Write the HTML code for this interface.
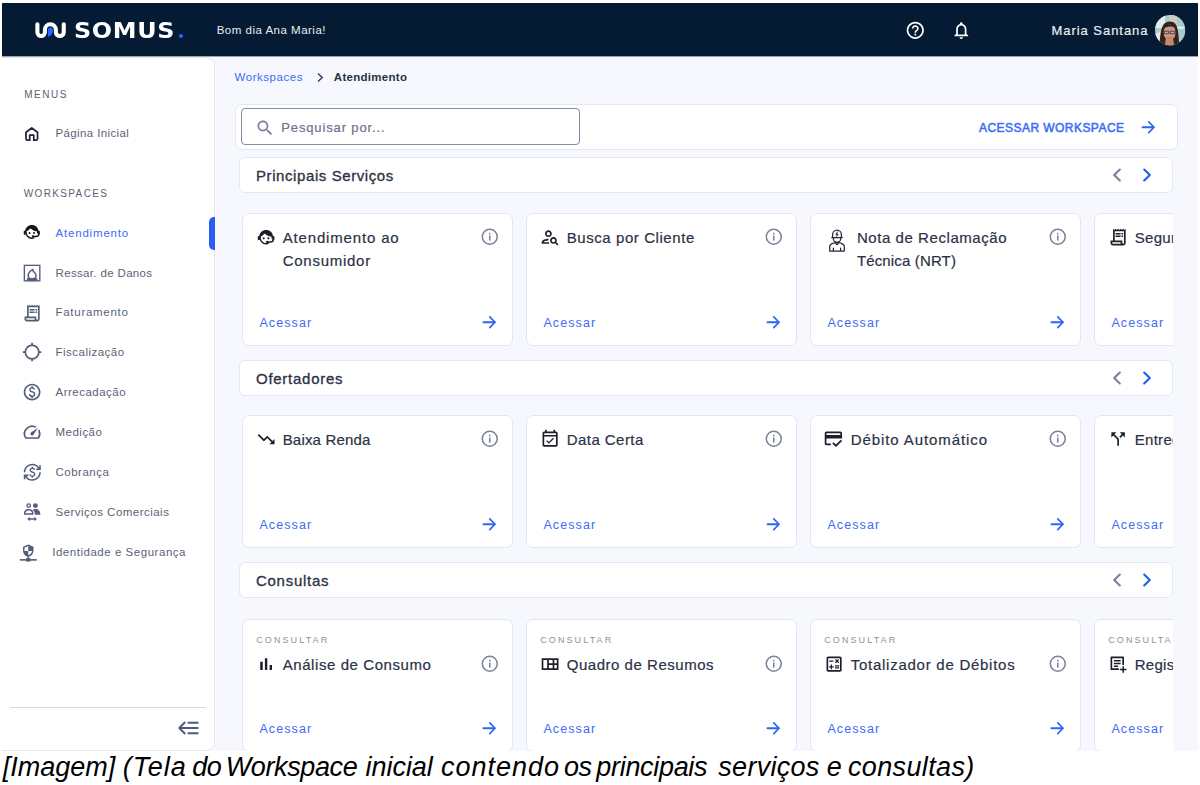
<!DOCTYPE html>
<html lang="pt-BR">
<head>
<meta charset="utf-8">
<title>Workspace Atendimento</title>
<style>
*{box-sizing:border-box;margin:0;padding:0}
html,body{width:1200px;height:785px;overflow:hidden;background:#fff}
body{font-family:"Liberation Sans",sans-serif;color:#2b3245;position:relative}
.shot{position:absolute;left:2px;top:3px;width:1196px;height:748px;background:#f6f8fd;overflow:hidden}
.hdr{position:absolute;left:0;top:0;width:1196px;height:53px;background:#041b33;border-bottom:1px solid #98a3af;box-sizing:content-box}
.t{position:absolute;white-space:nowrap;line-height:1}
.ic{position:absolute;display:block;overflow:visible}
.side{position:absolute;left:-1px;top:53.5px;width:213.6px;height:694px;background:#fff;border:1px solid #e3e7f3;border-radius:0 9px 9px 0}
.actbar{position:absolute;left:207.2px;top:213.5px;width:5.5px;height:33.5px;background:#2a5df2;border-radius:5px 0 0 5px}
.sep{position:absolute;left:8px;top:704px;width:196px;height:1px;background:#d5d8e3}
.box{position:absolute;background:#fff;border:1px solid #e3e8f6;border-radius:6px}
.row{position:absolute;left:237px;width:934px;height:140px;overflow:hidden}
.card{position:absolute;top:0;width:271px;height:133px;background:#fff;border:1px solid #e1e6f5;border-radius:7px}
.cap{position:absolute;left:0;top:749px;width:1200px;height:36px;font-size:27px;font-style:italic;color:#000;white-space:nowrap;line-height:36px}
.cap span{position:absolute;top:0}
.med{-webkit-text-stroke:.2px currentColor}
.med2{-webkit-text-stroke:.32px currentColor}
.med3{-webkit-text-stroke:.5px currentColor}
</style>
</head>
<body>
<div class="shot">

<div class="hdr">
<svg class="ic" style="left:28.0px;top:13.0px" width="40" height="28" viewBox="30 16 40 28" fill="none"><path d="M37.4 24.3V32.3A3.75 3.75 0 0 0 44.9 32.3V29.8A5.5 5.5 0 0 1 55.9 29.8V32.3A3.93 3.93 0 0 0 63.75 32.3V24.3" stroke="#fff" stroke-width="4.100" stroke-linecap="round" stroke-linejoin="round"/><path d="M47.9 37V29.900a2.500 2.500 0 0 1 5 0c0 3.600-1.800 6.100-5 7.100z" fill="#2a66ff"/></svg>
<div class="t" style="left:72.3px;top:15.2px;font-family:'DejaVu Sans',sans-serif;font-weight:bold;font-size:21.4px;color:#fff;letter-spacing:.6px;transform-origin:0 0;transform:scaleX(1.115);line-height:25px">SOMUS</div>
<div style="position:absolute;left:176.6px;top:30.5px;width:4.8px;height:4.8px;border-radius:50%;background:#2a66ff"></div>
<div class="t" style="left:214.70px;top:21.75px;font-size:11.5px;color:#e9ecf1;letter-spacing:0.497px;font-weight:normal;">Bom dia Ana Maria!</div>
<svg class="ic" style="left:902.50px;top:17.00px;color:#fff" width="20.6" height="20.6" viewBox="0 0 24 24" fill="currentColor" ><path d="M11 18h2v-2h-2v2zm1-16C6.48 2 2 6.48 2 12s4.48 10 10 10 10-4.48 10-10S17.52 2 12 2zm0 18c-4.41 0-8-3.59-8-8s3.59-8 8-8 8 3.59 8 8-3.59 8-8 8zm0-14c-2.21 0-4 1.79-4 4h2c0-1.1.9-2 2-2s2 .9 2 2c0 2-3 1.75-3 5h2c0-2.25 3-2.5 3-5 0-2.21-1.79-4-4-4z"/></svg>
<svg class="ic" style="left:949.10px;top:17.30px;color:#fff" width="20.6" height="20.6" viewBox="0 0 24 24" fill="currentColor" ><path d="M12 22c1.1 0 2-.9 2-2h-4c0 1.1.9 2 2 2zm6-6v-5c0-3.07-1.63-5.64-4.5-6.32V4c0-.83-.67-1.5-1.5-1.5s-1.5.67-1.5 1.5v.68C7.64 5.36 6 7.92 6 11v5l-2 2v1h16v-1l-2-2zm-2 1H8v-6c0-2.48 1.51-4.5 4-4.5s4 2.02 4 4.5v6z"/></svg>
<div class="t med" style="left:1049.50px;top:20.90px;font-size:13px;color:#e9ecf1;letter-spacing:0.954px;font-weight:normal;">Maria Santana</div>
<svg class="ic" style="left:1152.6px;top:11.9px" width="30.4" height="30.4" viewBox="0 0 30 30"><defs><clipPath id="av"><circle cx="15" cy="15" r="15"/></clipPath><filter id="bl" x="-10%" y="-10%" width="120%" height="120%"><feGaussianBlur stdDeviation=".75"/></filter></defs><g clip-path="url(#av)"><rect width="30" height="30" fill="#a7cbcc"/><g filter="url(#bl)"><rect x="-2" y="-2" width="12" height="15" fill="#e2eceb"/><rect x="14" y="-2" width="8" height="12" fill="#cdcbc0"/><rect x="22" y="-2" width="10" height="9" fill="#a4c6c8"/><rect x="21.500" y="11.500" width="7" height="2.200" fill="#e8eeee"/><path d="M-1 19 6 16v15h-7z" fill="#ece6e8"/><path d="M4.500 31C4.800 23 5.500 12.500 8.800 8.800c2.800-3.200 8.600-3.400 11.200-.200 3 3.700 3.300 12 4 22.400z" fill="#33221f"/><ellipse cx="14.400" cy="17.200" rx="5.900" ry="7.800" fill="#c79986"/><path d="M10.500 23.500h7.500l1 8h-9.500z" fill="#c78666"/><path d="M8 13.800c.600-5.300 10.400-6.600 12.500-.500-3.300-2.800-9-2.600-12.500.500z" fill="#33221f"/><path d="M9.100 16h4.500v2.500H9.100zM15.100 16h4.500v2.500h-4.500z" fill="#cfa596" stroke="#3a2a2a" stroke-width=".8"/><path d="M12 22c1.300.800 3 .800 4.300 0" stroke="#b06a68" stroke-width="1" fill="none"/></g></g></svg>
</div>
<div class="side"></div>
<div class="actbar"></div><div class="sep"></div>
<div class="t" style="left:22.20px;top:86.90px;font-size:10px;color:#5b6174;letter-spacing:1.522px;font-weight:normal;">MENUS</div>
<div class="t" style="left:21.80px;top:185.89px;font-size:10px;color:#5b6174;letter-spacing:1.351px;font-weight:normal;">WORKSPACES</div>
<svg class="ic" style="left:20.25px;top:120.85px;color:#20232f" width="19.5" height="19.5" viewBox="0 0 24 24" fill="currentColor" ><path d="M4.9 10.2 12 4.9l7.1 5.3V18a1.9 1.9 0 0 1-1.9 1.9h-2.7v-6.3H9.5v6.3H6.8A1.9 1.9 0 0 1 4.9 18z" fill="none" stroke="currentColor" stroke-width="2.1" stroke-linejoin="round"/></svg>
<div class="t" style="left:53.50px;top:124.85px;font-size:11.5px;color:#5b6277;letter-spacing:0.384px;font-weight:normal;">Página Inicial</div>
<svg class="ic" style="left:20.20px;top:219.40px;color:#14161d" width="19.6" height="19.6" viewBox="0 0 24 24" fill="currentColor" ><path d="M3.900 11.700C4.100 6.700 7.800 3.600 12.100 3.600c4.500 0 8 3.100 8.100 7.700-2.600.400-5.400-.300-7.400-1.900-1-.800-1.800-1.300-2.900-1.500-1.200 1.800-3 3.200-6 3.800z"/><path d="M4.900 10.500v2.300c0 3.900 3.200 7.100 7.100 7.100.900 0 1.700-.100 2.500-.400" fill="none" stroke="currentColor" stroke-width="1.750" stroke-linecap="round"/><path d="M19.200 10.500v3.300" fill="none" stroke="currentColor" stroke-width="1.750"/><rect x="2.100" y="10.800" width="2.600" height="4.800" rx="1.100"/><rect x="19.300" y="10.800" width="2.600" height="4.800" rx="1.100"/><path d="M20.700 14.800c0 2-1.600 3-3.800 3h-3.600" fill="none" stroke="currentColor" stroke-width="1.650" stroke-linecap="round"/><circle cx="13.300" cy="17.700" r="1.350"/><circle cx="9.200" cy="13.500" r="1.250"/><circle cx="14.700" cy="13.500" r="1.250"/></svg>
<div class="t" style="left:53.50px;top:224.75px;font-size:11.5px;color:#3b6cf6;letter-spacing:0.813px;font-weight:normal;">Atendimento</div>
<svg class="ic" style="left:19.90px;top:259.67px;color:#555c78" width="20.2" height="20.2" viewBox="0 0 24 24" fill="currentColor" ><rect x="2.800" y="2.800" width="18.400" height="18.400" fill="none" stroke="currentColor" stroke-width="1.600"/><path d="M5.800 18h12.400v3.400H5.800z"/><path d="M13 7.600c-3.400 1.700-5.600 4.400-5.600 7.300 0 2.200 1.900 4 4.600 4s4.800-1.800 4.800-4c0-2.300-1.800-3.400-2.800-4.400-.900-.900-1.100-1.800-1-2.900z" fill="none" stroke="currentColor" stroke-width="1.800" stroke-linejoin="round"/></svg>
<div class="t" style="left:53.50px;top:264.62px;font-size:11.5px;color:#5b6277;letter-spacing:0.346px;font-weight:normal;">Ressar. de Danos</div>
<svg class="ic" style="left:19.90px;top:299.54px;color:#555c78" width="20.2" height="20.2" viewBox="0 0 24 24" fill="currentColor" ><path d="M19.5 3.500L18 2l-1.500 1.500L15 2l-1.500 1.500L12 2l-1.500 1.500L9 2 7.500 3.500 6 2v14H3v3c0 1.660 1.340 3 3 3h12c1.660 0 3-1.340 3-3V2l-1.500 1.500zM15 20H6c-.55 0-1-.45-1-1v-1h10v2zm4-1c0 .55-.45 1-1 1s-1-.45-1-1v-3H8V5h11v14z"/><path d="M9 7h6v2H9zM16 7h2v2h-2zM9 10h6v2H9zM16 10h2v2h-2z"/></svg>
<div class="t" style="left:53.50px;top:304.49px;font-size:11.5px;color:#5b6277;letter-spacing:0.72px;font-weight:normal;">Faturamento</div>
<svg class="ic" style="left:19.90px;top:339.41px;color:#555c78" width="20.2" height="20.2" viewBox="0 0 24 24" fill="currentColor" ><path d="M20.940 11c-.46-4.170-3.770-7.480-7.940-7.940V1h-2v2.060C6.830 3.520 3.520 6.830 3.060 11H1v2h2.060c.46 4.170 3.770 7.480 7.940 7.940V23h2v-2.060c4.170-.46 7.480-3.770 7.940-7.940H23v-2h-2.060zM12 19c-3.870 0-7-3.130-7-7s3.130-7 7-7 7 3.130 7 7-3.130 7-7 7z"/></svg>
<div class="t" style="left:53.50px;top:344.36px;font-size:11.5px;color:#5b6277;letter-spacing:0.484px;font-weight:normal;">Fiscalização</div>
<svg class="ic" style="left:19.90px;top:379.28px;color:#555c78" width="20.2" height="20.2" viewBox="0 0 24 24" fill="currentColor" ><path d="M12 2C6.480 2 2 6.480 2 12s4.480 10 10 10 10-4.480 10-10S17.520 2 12 2zm0 18c-4.410 0-8-3.590-8-8s3.590-8 8-8 8 3.590 8 8-3.590 8-8 8zm.89-8.900c-1.780-.59-2.640-.96-2.640-1.900 0-1.020 1.110-1.390 1.810-1.390 1.310 0 1.790.99 1.900 1.340l1.580-.67c-.15-.44-.82-1.910-2.660-2.230V5h-1.750v1.260c-2.600.56-2.620 2.850-2.620 2.960 0 2.270 2.250 2.910 3.350 3.310 1.580.56 2.280 1.070 2.280 2.030 0 1.130-1.050 1.610-1.980 1.610-1.820 0-2.340-1.870-2.400-2.090l-1.660.67c.63 2.190 2.280 2.780 3.020 2.960V19h1.750v-1.240c.52-.09 3.020-.59 3.020-3.220.01-1.390-.6-2.610-3-3.440z"/></svg>
<div class="t" style="left:53.50px;top:384.23px;font-size:11.5px;color:#5b6277;letter-spacing:0.49px;font-weight:normal;">Arrecadação</div>
<svg class="ic" style="left:19.90px;top:419.15px;color:#555c78" width="20.2" height="20.2" viewBox="0 0 24 24" fill="currentColor" ><path d="M20.380 8.570l-1.230 1.850a8 8 0 0 1-.22 7.580H5.070A8 8 0 0 1 15.580 6.850l1.850-1.230A10 10 0 0 0 3.350 19a2 2 0 0 0 1.720 1h13.850a2 2 0 0 0 1.740-1 10 10 0 0 0-.27-10.440z"/><path d="M10.590 15.410a2 2 0 0 0 2.830 0l5.660-8.490-8.490 5.660a2 2 0 0 0 0 2.830z"/></svg>
<div class="t" style="left:53.50px;top:424.10px;font-size:11.5px;color:#5b6277;letter-spacing:0.489px;font-weight:normal;">Medição</div>
<svg class="ic" style="left:20.70px;top:459.82px;color:#555c78" width="18.6" height="18.6" viewBox="0 0 24 24" fill="currentColor" ><path d="M12.890 11.100c-1.780-.59-2.640-.96-2.640-1.900 0-1.020 1.110-1.390 1.810-1.390 1.310 0 1.790.99 1.900 1.340l1.580-.67c-.15-.44-.82-1.910-2.660-2.230V5h-1.750v1.260c-2.600.56-2.620 2.850-2.620 2.960 0 2.270 2.250 2.910 3.350 3.310 1.580.56 2.280 1.070 2.280 2.030 0 1.130-1.050 1.610-1.980 1.610-1.820 0-2.340-1.870-2.400-2.090l-1.660.67c.63 2.190 2.280 2.780 3.020 2.960V19h1.750v-1.240c.52-.09 3.020-.59 3.020-3.220.01-1.390-.6-2.610-3-3.440z"/><path d="M3 21H1v-6h6v2H4.520c1.610 2.410 4.360 4 7.480 4 4.970 0 9-4.030 9-9h2c0 6.080-4.920 11-11 11-3.720 0-7.010-1.850-9-4.670V21zM1 12C1 5.920 5.920 1 12 1c3.720 0 7.010 1.850 9 4.670V3h2v6h-6V7h2.480C17.870 4.590 15.120 3 12 3c-4.970 0-9 4.030-9 9H1z"/></svg>
<div class="t" style="left:53.50px;top:463.97px;font-size:11.5px;color:#5b6277;letter-spacing:0.491px;font-weight:normal;">Cobrança</div>
<svg class="ic" style="left:19.90px;top:498.89px;color:#555c78" width="20.2" height="20.2" viewBox="0 0 24 24" fill="currentColor" ><circle cx="8" cy="4.200" r="2.050" fill="none" stroke="currentColor" stroke-width="1.600"/><circle cx="15.900" cy="4.200" r="2.850"/><path d="M3.100 14.300c0-3.300 2.200-5.100 4.900-5.100s4.900 1.800 4.900 5.100z" fill="none" stroke="currentColor" stroke-width="1.800" stroke-linejoin="round"/><path d="M14.300 8.500c4.300-.600 7.600 1.700 7.600 6.700h-6.500c0-2.700-.800-4.600-2.800-5.900z"/><path d="M6.300 20.200l3-2.800v1.950h5.400V17.400l3 2.800-3 2.800v-1.950H9.300V23z"/></svg>
<div class="t" style="left:53.50px;top:503.84px;font-size:11.5px;color:#5b6277;letter-spacing:0.478px;font-weight:normal;">Serviços Comerciais</div>
<svg class="ic" style="left:15.90px;top:538.76px;color:#555c78" width="20.2" height="20.2" viewBox="0 0 24 24" fill="currentColor" ><path fill-rule="evenodd" d="M12.200 3 6 5.500v5c0 3.400 2.600 6.500 6.200 7.300 3.600-.800 6.200-3.900 6.200-7.300v-5zM12.200 4.900v5.900H7.700V6.700zM12.200 10.800h4.500c-.300 2.300-2 4.300-4.500 5.100z"/><path d="M11.300 17h1.800v3.500h-1.800z"/><path d="M9.500 19.300h5.400v3.900H9.500z"/><path d="M2.100 20.300h20.200v1.900H2.100z"/></svg>
<div class="t" style="left:50.20px;top:543.71px;font-size:11.5px;color:#5b6277;letter-spacing:0.532px;font-weight:normal;">Identidade e Segurança</div>
<svg class="ic" style="left:175.0px;top:716.7px" width="22" height="16" viewBox="0 0 22 16" fill="none" stroke="#515a7a" stroke-width="1.950" stroke-linecap="round" stroke-linejoin="round"><path d="M11.400 2.700H20.700M2.800 8H20.700M11.400 13.300H20.700M7.700 2.500 2.300 8l5.400 5.500"/></svg>
<div class="t" style="left:232.50px;top:69.45px;font-size:11.5px;color:#3b6cf6;letter-spacing:0.549px;font-weight:normal;">Workspaces</div>
<svg class="ic" style="left:314.0px;top:68.5px" width="9" height="11" viewBox="0 0 9 11" fill="none"><path d="M2 1.500l4.200 4L2 9.500" stroke="#3a4154" stroke-width="1.500"/></svg>
<div class="t" style="left:331.80px;top:69.45px;font-size:11.5px;color:#2b3245;letter-spacing:0.292px;font-weight:bold;">Atendimento</div>
<div class="box" style="left:233.0px;top:101.0px;width:943px;height:46px;border-radius:7px"></div>
<div class="box" style="left:239.0px;top:105.2px;width:339.3px;height:37px;border:1.3px solid #858aa2;border-radius:4px"></div>
<svg class="ic" style="left:252.60px;top:114.60px;color:#7880a2" width="20" height="20" viewBox="0 0 24 24" fill="currentColor" ><path d="M15.5 14h-.79l-.28-.27C15.41 12.59 16 11.11 16 9.5 16 5.91 13.09 3 9.5 3S3 5.91 3 9.5 5.91 16 9.5 16c1.61 0 3.09-.59 4.23-1.57l.27.28v.79l5 4.99L20.49 19l-4.99-5zm-6 0C7.01 14 5 11.99 5 9.5S7.01 5 9.5 5 14 7.01 14 9.5 11.99 14 9.5 14z"/></svg>
<div class="t med" style="left:279.30px;top:117.70px;font-size:13px;color:#6c728e;letter-spacing:0.858px;font-weight:normal;">Pesquisar por...</div>
<div class="t med3" style="left:977.00px;top:118.63px;font-size:12px;color:#3b6cf6;letter-spacing:0.45px;font-weight:normal;">ACESSAR WORKSPACE</div>
<svg class="ic" style="left:1135.75px;top:113.75px;color:#2f66f5" width="20.5" height="20.5" viewBox="0 0 24 24" fill="currentColor" ><path d="M5.200 12h13.600M12.600 5.700l6.200 6.300-6.200 6.300" fill="none" stroke="currentColor" stroke-width="2.050" stroke-linecap="round" stroke-linejoin="round"/></svg>
<div class="box" style="left:237px;top:154px;width:934px;height:36px"></div>
<div class="t med2" style="left:254.00px;top:165.14px;font-size:15px;color:#2b3245;letter-spacing:0.588px;font-weight:normal;">Principais Serviços</div>
<svg class="ic" style="left:1102.90px;top:160.00px;color:#7c819b" width="24" height="24" viewBox="0 0 24 24" fill="currentColor" ><path d="M14.800 6.600 9.200 12l5.600 5.400" fill="none" stroke="currentColor" stroke-width="2.150" stroke-linecap="round" stroke-linejoin="round"/></svg>
<svg class="ic" style="left:1133.10px;top:160.00px;color:#215ef2" width="24" height="24" viewBox="0 0 24 24" fill="currentColor" ><path d="M9.200 6.600 14.800 12l-5.600 5.400" fill="none" stroke="currentColor" stroke-width="2.150" stroke-linecap="round" stroke-linejoin="round"/></svg>
<div class="row" style="top:210px">
<div class="card" style="left:3px">
<svg class="ic" style="left:12.70px;top:12.70px;color:#1c1f2a" width="20.2" height="20.2" viewBox="0 0 24 24" fill="currentColor"><path d="M3.900 11.700C4.100 6.700 7.800 3.600 12.100 3.600c4.500 0 8 3.100 8.100 7.700-2.600.400-5.400-.300-7.400-1.900-1-.800-1.800-1.300-2.900-1.500-1.200 1.800-3 3.200-6 3.800z"/><path d="M4.900 10.500v2.300c0 3.900 3.200 7.100 7.100 7.100.900 0 1.700-.100 2.500-.400" fill="none" stroke="currentColor" stroke-width="1.750" stroke-linecap="round"/><path d="M19.200 10.500v3.300" fill="none" stroke="currentColor" stroke-width="1.750"/><rect x="2.100" y="10.800" width="2.600" height="4.800" rx="1.100"/><rect x="19.300" y="10.800" width="2.600" height="4.800" rx="1.100"/><path d="M20.700 14.800c0 2-1.600 3-3.800 3h-3.600" fill="none" stroke="currentColor" stroke-width="1.650" stroke-linecap="round"/><circle cx="13.300" cy="17.700" r="1.350"/><circle cx="9.200" cy="13.500" r="1.250"/><circle cx="14.700" cy="13.500" r="1.250"/></svg>
<div class="t med" style="left:39.70px;top:16.24px;font-size:15px;color:#2b3245;letter-spacing:0.84px">Atendimento ao</div>
<div class="t med" style="left:39.70px;top:38.84px;font-size:15px;color:#2b3245;letter-spacing:0.737px">Consumidor</div>
<svg class="ic" style="left:237.05px;top:13.45px;color:#7b819a" width="19.5" height="19.5" viewBox="0 0 24 24" fill="currentColor"><circle cx="12" cy="12" r="9.2" fill="none" stroke="currentColor" stroke-width="1.850"/><rect x="11.050" y="10.500" width="1.900" height="6.300"/><rect x="11.050" y="7.200" width="1.900" height="1.900"/></svg>
<div class="t" style="left:16.40px;top:102.92px;font-size:12.5px;color:#3b6cf6;letter-spacing:1.108px">Acessar</div>
<svg class="ic" style="left:236.45px;top:98.25px;color:#2f66f5" width="20.5" height="20.5" viewBox="0 0 24 24" fill="currentColor"><path d="M5.200 12h13.600M12.600 5.700l6.200 6.300-6.200 6.300" fill="none" stroke="currentColor" stroke-width="2.050" stroke-linecap="round" stroke-linejoin="round"/></svg>
</div>
<div class="card" style="left:287px">
<svg class="ic" style="left:12.70px;top:12.70px;color:#1c1f2a" width="20.2" height="20.2" viewBox="0 0 24 24" fill="currentColor"><path d="M10 12c2.210 0 4-1.790 4-4s-1.790-4-4-4-4 1.790-4 4 1.790 4 4 4zm0-6c1.100 0 2 .9 2 2s-.9 2-2 2-2-.9-2-2 .9-2 2-2z"/><path d="M4 18c.22-.72 3.310-2 6-2 0-.7.130-1.370.35-1.990C7.620 13.910 2 15.270 2 18v2h9.540c-.52-.58-.93-1.250-1.190-2H4z"/><path d="M19.430 18.020c.36-.59.570-1.280.570-2.020 0-2.210-1.790-4-4-4s-4 1.790-4 4 1.790 4 4 4c.74 0 1.430-.22 2.020-.57L20.590 22 22 20.590l-2.570-2.570zM16 18c-1.100 0-2-.9-2-2s.9-2 2-2 2 .9 2 2-.9 2-2 2z"/></svg>
<div class="t med" style="left:39.70px;top:16.24px;font-size:15px;color:#2b3245;letter-spacing:0.575px">Busca por Cliente</div>
<svg class="ic" style="left:237.05px;top:13.45px;color:#7b819a" width="19.5" height="19.5" viewBox="0 0 24 24" fill="currentColor"><circle cx="12" cy="12" r="9.2" fill="none" stroke="currentColor" stroke-width="1.850"/><rect x="11.050" y="10.500" width="1.900" height="6.300"/><rect x="11.050" y="7.200" width="1.900" height="1.900"/></svg>
<div class="t" style="left:16.40px;top:102.92px;font-size:12.5px;color:#3b6cf6;letter-spacing:1.108px">Acessar</div>
<svg class="ic" style="left:236.45px;top:98.25px;color:#2f66f5" width="20.5" height="20.5" viewBox="0 0 24 24" fill="currentColor"><path d="M5.200 12h13.600M12.600 5.700l6.200 6.300-6.200 6.300" fill="none" stroke="currentColor" stroke-width="2.050" stroke-linecap="round" stroke-linejoin="round"/></svg>
</div>
<div class="card" style="left:571px">
<svg class="ic" style="left:17.20px;top:13.70px;color:#262936" width="18" height="24" viewBox="0 0 18 24" fill="none" stroke="currentColor" stroke-width="1.250" stroke-linejoin="round" stroke-linecap="round"><path d="M4.600 9.400V6.700a4.400 4.700 0 0 1 8.800 0v2.700"/><path d="M3.700 9.500h10.600"/><path d="M5.400 9.800v1.100a3.600 3.400 0 0 0 7.200 0V9.800"/><path d="M7.700 13.800v1.500L9 16.700l1.300-1.400v-1.500"/><path d="M1.700 23.100v-4.300c0-2.400 2.100-3.400 5.600-4.100M16.300 23.100v-4.300c0-2.400-2.100-3.400-5.600-4.100M1.700 23.100h14.600M5.400 23v-2.800M12.600 23v-2.800"/><path d="M9.600 3.800 7.800 6.400h2.300L8.600 8.500" stroke-width=".9" fill="currentColor"/></svg>
<div class="t med" style="left:45.90px;top:16.24px;font-size:15px;color:#2b3245;letter-spacing:0.566px">Nota de Reclamação</div>
<div class="t med" style="left:45.90px;top:38.84px;font-size:15px;color:#2b3245;letter-spacing:0.147px">Técnica (NRT)</div>
<svg class="ic" style="left:237.05px;top:13.45px;color:#7b819a" width="19.5" height="19.5" viewBox="0 0 24 24" fill="currentColor"><circle cx="12" cy="12" r="9.2" fill="none" stroke="currentColor" stroke-width="1.850"/><rect x="11.050" y="10.500" width="1.900" height="6.300"/><rect x="11.050" y="7.200" width="1.900" height="1.900"/></svg>
<div class="t" style="left:16.40px;top:102.92px;font-size:12.5px;color:#3b6cf6;letter-spacing:1.108px">Acessar</div>
<svg class="ic" style="left:236.45px;top:98.25px;color:#2f66f5" width="20.5" height="20.5" viewBox="0 0 24 24" fill="currentColor"><path d="M5.200 12h13.600M12.600 5.700l6.200 6.300-6.200 6.300" fill="none" stroke="currentColor" stroke-width="2.050" stroke-linecap="round" stroke-linejoin="round"/></svg>
</div>
<div class="card" style="left:855px">
<svg class="ic" style="left:12.70px;top:12.70px;color:#1c1f2a" width="20.2" height="20.2" viewBox="0 0 24 24" fill="currentColor"><path d="M19.5 3.500L18 2l-1.500 1.500L15 2l-1.500 1.500L12 2l-1.500 1.500L9 2 7.500 3.500 6 2v14H3v3c0 1.660 1.340 3 3 3h12c1.660 0 3-1.340 3-3V2l-1.500 1.500zM15 20H6c-.55 0-1-.45-1-1v-1h10v2zm4-1c0 .55-.45 1-1 1s-1-.45-1-1v-3H8V5h11v14z"/><path d="M9 7h6v2H9zM16 7h2v2h-2zM9 10h6v2H9zM16 10h2v2h-2z"/></svg>
<div class="t med" style="left:39.70px;top:16.24px;font-size:15px;color:#2b3245;letter-spacing:0.3px">Segurança</div>
<svg class="ic" style="left:237.05px;top:13.45px;color:#7b819a" width="19.5" height="19.5" viewBox="0 0 24 24" fill="currentColor"><circle cx="12" cy="12" r="9.2" fill="none" stroke="currentColor" stroke-width="1.850"/><rect x="11.050" y="10.500" width="1.900" height="6.300"/><rect x="11.050" y="7.200" width="1.900" height="1.900"/></svg>
<div class="t" style="left:16.40px;top:102.92px;font-size:12.5px;color:#3b6cf6;letter-spacing:1.108px">Acessar</div>
<svg class="ic" style="left:236.45px;top:98.25px;color:#2f66f5" width="20.5" height="20.5" viewBox="0 0 24 24" fill="currentColor"><path d="M5.200 12h13.600M12.600 5.700l6.200 6.300-6.200 6.300" fill="none" stroke="currentColor" stroke-width="2.050" stroke-linecap="round" stroke-linejoin="round"/></svg>
</div>
</div>
<div class="box" style="left:237px;top:357px;width:934px;height:36px"></div>
<div class="t med2" style="left:254.00px;top:368.14px;font-size:15px;color:#2b3245;letter-spacing:0.73px;font-weight:normal;">Ofertadores</div>
<svg class="ic" style="left:1102.90px;top:363.00px;color:#7c819b" width="24" height="24" viewBox="0 0 24 24" fill="currentColor" ><path d="M14.800 6.600 9.200 12l5.600 5.400" fill="none" stroke="currentColor" stroke-width="2.150" stroke-linecap="round" stroke-linejoin="round"/></svg>
<svg class="ic" style="left:1133.10px;top:363.00px;color:#215ef2" width="24" height="24" viewBox="0 0 24 24" fill="currentColor" ><path d="M9.200 6.600 14.800 12l-5.600 5.400" fill="none" stroke="currentColor" stroke-width="2.150" stroke-linecap="round" stroke-linejoin="round"/></svg>
<div class="row" style="top:412px">
<div class="card" style="left:3px">
<svg class="ic" style="left:12.70px;top:12.70px;color:#1c1f2a" width="20.2" height="20.2" viewBox="0 0 24 24" fill="currentColor"><path d="M16 18l2.290-2.290-4.880-4.880-4 4L2 7.410 3.410 6l6 6 4-4 6.300 6.290L22 12v6z"/></svg>
<div class="t med" style="left:39.70px;top:16.24px;font-size:15px;color:#2b3245;letter-spacing:0.181px">Baixa Renda</div>
<svg class="ic" style="left:237.05px;top:13.45px;color:#7b819a" width="19.5" height="19.5" viewBox="0 0 24 24" fill="currentColor"><circle cx="12" cy="12" r="9.2" fill="none" stroke="currentColor" stroke-width="1.850"/><rect x="11.050" y="10.500" width="1.900" height="6.300"/><rect x="11.050" y="7.200" width="1.900" height="1.900"/></svg>
<div class="t" style="left:16.40px;top:102.92px;font-size:12.5px;color:#3b6cf6;letter-spacing:1.108px">Acessar</div>
<svg class="ic" style="left:236.45px;top:98.25px;color:#2f66f5" width="20.5" height="20.5" viewBox="0 0 24 24" fill="currentColor"><path d="M5.200 12h13.600M12.600 5.700l6.200 6.300-6.200 6.300" fill="none" stroke="currentColor" stroke-width="2.050" stroke-linecap="round" stroke-linejoin="round"/></svg>
</div>
<div class="card" style="left:287px">
<svg class="ic" style="left:12.70px;top:12.70px;color:#1c1f2a" width="20.2" height="20.2" viewBox="0 0 24 24" fill="currentColor"><path d="M19 3h-1V1h-2v2H8V1H6v2H5c-1.100 0-2 .900-2 2v14c0 1.100.900 2 2 2h14c1.100 0 2-.900 2-2V5c0-1.100-.900-2-2-2zm0 16H5V9h14v10zM5 7V5h14v2H5zm5.560 10.460l5.930-5.930-1.060-1.060-4.870 4.870-2.110-2.110-1.060 1.060z"/></svg>
<div class="t med" style="left:39.70px;top:16.24px;font-size:15px;color:#2b3245;letter-spacing:0.452px">Data Certa</div>
<svg class="ic" style="left:237.05px;top:13.45px;color:#7b819a" width="19.5" height="19.5" viewBox="0 0 24 24" fill="currentColor"><circle cx="12" cy="12" r="9.2" fill="none" stroke="currentColor" stroke-width="1.850"/><rect x="11.050" y="10.500" width="1.900" height="6.300"/><rect x="11.050" y="7.200" width="1.900" height="1.900"/></svg>
<div class="t" style="left:16.40px;top:102.92px;font-size:12.5px;color:#3b6cf6;letter-spacing:1.108px">Acessar</div>
<svg class="ic" style="left:236.45px;top:98.25px;color:#2f66f5" width="20.5" height="20.5" viewBox="0 0 24 24" fill="currentColor"><path d="M5.200 12h13.600M12.600 5.700l6.200 6.300-6.200 6.300" fill="none" stroke="currentColor" stroke-width="2.050" stroke-linecap="round" stroke-linejoin="round"/></svg>
</div>
<div class="card" style="left:571px">
<svg class="ic" style="left:11.90px;top:12.40px;color:#1c1f2a" width="20.8" height="20.8" viewBox="0 0 24 24" fill="currentColor"><path d="M20 4H4c-1.110 0-1.990.89-1.990 2L2 18c0 1.110.89 2 2 2h5v-2H4v-6h18V6c0-1.110-.89-2-2-2zm0 4H4V6h16v2zm-5.070 11.170l-2.830-2.830-1.410 1.410L14.930 22 22 14.930l-1.410-1.410-5.660 5.650z"/></svg>
<div class="t med" style="left:39.70px;top:16.24px;font-size:15px;color:#2b3245;letter-spacing:0.91px">Débito Automático</div>
<svg class="ic" style="left:237.05px;top:13.45px;color:#7b819a" width="19.5" height="19.5" viewBox="0 0 24 24" fill="currentColor"><circle cx="12" cy="12" r="9.2" fill="none" stroke="currentColor" stroke-width="1.850"/><rect x="11.050" y="10.500" width="1.900" height="6.300"/><rect x="11.050" y="7.200" width="1.900" height="1.900"/></svg>
<div class="t" style="left:16.40px;top:102.92px;font-size:12.5px;color:#3b6cf6;letter-spacing:1.108px">Acessar</div>
<svg class="ic" style="left:236.45px;top:98.25px;color:#2f66f5" width="20.5" height="20.5" viewBox="0 0 24 24" fill="currentColor"><path d="M5.200 12h13.600M12.600 5.700l6.200 6.300-6.200 6.300" fill="none" stroke="currentColor" stroke-width="2.050" stroke-linecap="round" stroke-linejoin="round"/></svg>
</div>
<div class="card" style="left:855px">
<svg class="ic" style="left:12.70px;top:12.70px;color:#1c1f2a" width="20.2" height="20.2" viewBox="0 0 24 24" fill="currentColor"><path d="M14 4l2.290 2.290-2.880 2.880 1.420 1.420 2.880-2.880L20 10V4zm-4 0H4v6l2.290-2.290 4.710 4.700V20h2v-8.410l-5.290-5.300z"/></svg>
<div class="t med" style="left:39.70px;top:16.24px;font-size:15px;color:#2b3245;letter-spacing:0.3px">Entrega</div>
<svg class="ic" style="left:237.05px;top:13.45px;color:#7b819a" width="19.5" height="19.5" viewBox="0 0 24 24" fill="currentColor"><circle cx="12" cy="12" r="9.2" fill="none" stroke="currentColor" stroke-width="1.850"/><rect x="11.050" y="10.500" width="1.900" height="6.300"/><rect x="11.050" y="7.200" width="1.900" height="1.900"/></svg>
<div class="t" style="left:16.40px;top:102.92px;font-size:12.5px;color:#3b6cf6;letter-spacing:1.108px">Acessar</div>
<svg class="ic" style="left:236.45px;top:98.25px;color:#2f66f5" width="20.5" height="20.5" viewBox="0 0 24 24" fill="currentColor"><path d="M5.200 12h13.600M12.600 5.700l6.200 6.300-6.200 6.300" fill="none" stroke="currentColor" stroke-width="2.050" stroke-linecap="round" stroke-linejoin="round"/></svg>
</div>
</div>
<div class="box" style="left:237px;top:559px;width:934px;height:36px"></div>
<div class="t med2" style="left:254.00px;top:570.14px;font-size:15px;color:#2b3245;letter-spacing:0.725px;font-weight:normal;">Consultas</div>
<svg class="ic" style="left:1102.90px;top:565.00px;color:#7c819b" width="24" height="24" viewBox="0 0 24 24" fill="currentColor" ><path d="M14.800 6.600 9.200 12l5.600 5.400" fill="none" stroke="currentColor" stroke-width="2.150" stroke-linecap="round" stroke-linejoin="round"/></svg>
<svg class="ic" style="left:1133.10px;top:565.00px;color:#215ef2" width="24" height="24" viewBox="0 0 24 24" fill="currentColor" ><path d="M9.200 6.600 14.800 12l-5.600 5.400" fill="none" stroke="currentColor" stroke-width="2.150" stroke-linecap="round" stroke-linejoin="round"/></svg>
<div class="row" style="top:616px">
<div class="card" style="left:3px">
<svg class="ic" style="left:12.70px;top:33.80px;color:#1c1f2a" width="20.2" height="20.2" viewBox="0 0 24 24" fill="currentColor"><path d="M5 9.200h3V19H5zM10.600 5h2.800v14h-2.800zM16.200 13H19v6h-2.800z"/></svg>
<div class="t med" style="left:39.70px;top:36.84px;font-size:15px;color:#2b3245;letter-spacing:0.576px">Análise de Consumo</div>
<div class="t" style="left:13.20px;top:15.73px;font-size:9px;color:#8c92a6;letter-spacing:2.104px">CONSULTAR</div>
<svg class="ic" style="left:237.05px;top:34.05px;color:#7b819a" width="19.5" height="19.5" viewBox="0 0 24 24" fill="currentColor"><circle cx="12" cy="12" r="9.2" fill="none" stroke="currentColor" stroke-width="1.850"/><rect x="11.050" y="10.500" width="1.900" height="6.300"/><rect x="11.050" y="7.200" width="1.900" height="1.900"/></svg>
<div class="t" style="left:16.40px;top:102.92px;font-size:12.5px;color:#3b6cf6;letter-spacing:1.108px">Acessar</div>
<svg class="ic" style="left:236.45px;top:98.25px;color:#2f66f5" width="20.5" height="20.5" viewBox="0 0 24 24" fill="currentColor"><path d="M5.200 12h13.600M12.600 5.700l6.200 6.300-6.200 6.300" fill="none" stroke="currentColor" stroke-width="2.050" stroke-linecap="round" stroke-linejoin="round"/></svg>
</div>
<div class="card" style="left:287px">
<svg class="ic" style="left:12.70px;top:33.80px;color:#1c1f2a" width="20.2" height="20.2" viewBox="0 0 24 24" fill="currentColor"><path fill-rule="evenodd" d="M2 5v14h20V5zm2 2h4.500v10H4zm6.500 0h4.500v4h-4.500zm6.500 0H20v4h-3zm-6.500 6h4.500v4h-4.500zm6.500 0H20v4h-3z"/></svg>
<div class="t med" style="left:39.70px;top:36.84px;font-size:15px;color:#2b3245;letter-spacing:0.531px">Quadro de Resumos</div>
<div class="t" style="left:13.20px;top:15.73px;font-size:9px;color:#8c92a6;letter-spacing:2.104px">CONSULTAR</div>
<svg class="ic" style="left:237.05px;top:34.05px;color:#7b819a" width="19.5" height="19.5" viewBox="0 0 24 24" fill="currentColor"><circle cx="12" cy="12" r="9.2" fill="none" stroke="currentColor" stroke-width="1.850"/><rect x="11.050" y="10.500" width="1.900" height="6.300"/><rect x="11.050" y="7.200" width="1.900" height="1.900"/></svg>
<div class="t" style="left:16.40px;top:102.92px;font-size:12.5px;color:#3b6cf6;letter-spacing:1.108px">Acessar</div>
<svg class="ic" style="left:236.45px;top:98.25px;color:#2f66f5" width="20.5" height="20.5" viewBox="0 0 24 24" fill="currentColor"><path d="M5.200 12h13.600M12.600 5.700l6.200 6.300-6.200 6.300" fill="none" stroke="currentColor" stroke-width="2.050" stroke-linecap="round" stroke-linejoin="round"/></svg>
</div>
<div class="card" style="left:571px">
<svg class="ic" style="left:12.70px;top:33.80px;color:#1c1f2a" width="20.2" height="20.2" viewBox="0 0 24 24" fill="currentColor"><path d="M19 3H5c-1.100 0-2 .9-2 2v14c0 1.100.9 2 2 2h14c1.100 0 2-.9 2-2V5c0-1.100-.9-2-2-2zm0 16H5V5h14v14z"/><path d="M6.250 7.720h5v1.500h-5zM13 15.750h5v1.500h-5zM13 13.250h5v1.500h-5zM8 18h1.500v-2h2v-1.500h-2v-2H8v2H6V16h2zM14.090 10.950l1.410-1.410 1.410 1.410 1.060-1.060-1.410-1.420 1.410-1.410L16.910 6 15.500 7.410 14.090 6l-1.060 1.060 1.410 1.410-1.410 1.420z"/></svg>
<div class="t med" style="left:39.70px;top:36.84px;font-size:15px;color:#2b3245;letter-spacing:0.742px">Totalizador de Débitos</div>
<div class="t" style="left:13.20px;top:15.73px;font-size:9px;color:#8c92a6;letter-spacing:2.104px">CONSULTAR</div>
<svg class="ic" style="left:237.05px;top:34.05px;color:#7b819a" width="19.5" height="19.5" viewBox="0 0 24 24" fill="currentColor"><circle cx="12" cy="12" r="9.2" fill="none" stroke="currentColor" stroke-width="1.850"/><rect x="11.050" y="10.500" width="1.900" height="6.300"/><rect x="11.050" y="7.200" width="1.900" height="1.900"/></svg>
<div class="t" style="left:16.40px;top:102.92px;font-size:12.5px;color:#3b6cf6;letter-spacing:1.108px">Acessar</div>
<svg class="ic" style="left:236.45px;top:98.25px;color:#2f66f5" width="20.5" height="20.5" viewBox="0 0 24 24" fill="currentColor"><path d="M5.200 12h13.600M12.600 5.700l6.200 6.300-6.200 6.300" fill="none" stroke="currentColor" stroke-width="2.050" stroke-linecap="round" stroke-linejoin="round"/></svg>
</div>
<div class="card" style="left:855px">
<svg class="ic" style="left:12.70px;top:33.80px;color:#1c1f2a" width="20.2" height="20.2" viewBox="0 0 24 24" fill="currentColor"><path d="M4 3h14a1 1 0 0 1 1 1v9h-2V5H5v12h8v2H4a1 1 0 0 1-1-1V4a1 1 0 0 1 1-1z"/><path d="M7 7h8v1.800H7zM7 10.300h8v1.800H7zM7 13.600h5v1.800H7zM17.200 14.500H19v3h3v1.800h-3v3h-1.800v-3h-3v-1.800h3z"/></svg>
<div class="t med" style="left:39.70px;top:36.84px;font-size:15px;color:#2b3245;letter-spacing:0.3px">Registro</div>
<div class="t" style="left:13.20px;top:15.73px;font-size:9px;color:#8c92a6;letter-spacing:2.104px">CONSULTAR</div>
<svg class="ic" style="left:237.05px;top:34.05px;color:#7b819a" width="19.5" height="19.5" viewBox="0 0 24 24" fill="currentColor"><circle cx="12" cy="12" r="9.2" fill="none" stroke="currentColor" stroke-width="1.850"/><rect x="11.050" y="10.500" width="1.900" height="6.300"/><rect x="11.050" y="7.200" width="1.900" height="1.900"/></svg>
<div class="t" style="left:16.40px;top:102.92px;font-size:12.5px;color:#3b6cf6;letter-spacing:1.108px">Acessar</div>
<svg class="ic" style="left:236.45px;top:98.25px;color:#2f66f5" width="20.5" height="20.5" viewBox="0 0 24 24" fill="currentColor"><path d="M5.200 12h13.600M12.600 5.700l6.200 6.300-6.200 6.300" fill="none" stroke="currentColor" stroke-width="2.050" stroke-linecap="round" stroke-linejoin="round"/></svg>
</div>
</div>
</div>
<div class="cap"><span style="left:2.7px;letter-spacing:0.0px">[Imagem]</span> <span style="left:122.85px;letter-spacing:1.0px">(Tela</span> <span style="left:192.15px;letter-spacing:-0.5px">do</span> <span style="left:225.7px;letter-spacing:-0.375px">Workspace</span> <span style="left:365.5px;letter-spacing:-0.033px">inicial</span> <span style="left:441.0px;letter-spacing:1.0px">contendo</span> <span style="left:564.0px;letter-spacing:-0.5px">os</span> <span style="left:596.35px;letter-spacing:-0.322px">principais</span> <span style="left:718.3px;letter-spacing:0.286px">serviços</span> <span style="left:826.65px;letter-spacing:0.0px">e</span> <span style="left:848.0px;letter-spacing:0.356px">consultas)</span></div>
</body>
</html>
